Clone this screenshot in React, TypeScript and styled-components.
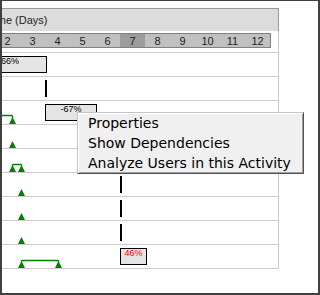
import React from "react";
import styled, { createGlobalStyle } from "styled-components";

const Global = createGlobalStyle`
  html, body { margin: 0; padding: 0; background: #fff; }
  #root { width: 320px; height: 295px; }
`;

const Frame = styled.div`
  position: relative;
  box-sizing: border-box;
  width: 320px;
  height: 295px;
  overflow: hidden;
  background: #fff;
  border-style: solid;
  border-color: #404040;
  border-width: 1px 2px 2px 2px;
  padding-top: 7px;
`;

const Chart = styled.div`
  width: 309px;
  margin-left: -32px;
  font-family: "Liberation Sans", Arial, sans-serif;
`;

const Band = styled.div`
  box-sizing: border-box;
  height: 23px;
  border-top: 1px solid #9a9a9a;
  border-right: 1px solid #9a9a9a;
  background: #dcdcdc;
  padding-left: 18px;
  display: flex;
  align-items: center;
  font-size: 11px;
  color: #222;
`;

const Body = styled.div`
  border-right: 1px solid #cccccc;
  padding-top: 2px;
`;

const DayStrip = styled.div`
  box-sizing: border-box;
  display: flex;
  width: 301px;
  height: 15px;
  border: 1px solid #808080;
  border-left: none;
  background: #c0c0c0;
  margin-bottom: 4px;
`;

const DayCell = styled.div<{ $current?: boolean }>`
  width: 25px;
  flex: none;
  display: flex;
  align-items: center;
  justify-content: center;
  font-size: 11px;
  color: #222;
  background: ${(p) => (p.$current ? "#9c9c9c" : "transparent")};
`;

const Rows = styled.div`
  border-bottom: 1px solid #cccccc;
`;

const Row = styled.div`
  position: relative;
  box-sizing: border-box;
  height: 24px;
  border-top: 1px solid #cccccc;
`;

const Bar = styled.div<{ $red?: boolean }>`
  position: absolute;
  top: 3px;
  box-sizing: border-box;
  height: 17px;
  border: 1px solid #000;
  background: #e4e4e4;
  font-size: 9px;
  line-height: 9px;
  text-align: center;
  white-space: nowrap;
  color: ${(p) => (p.$red ? "#ff0000" : "#000")};
`;

const Tick = styled.div`
  position: absolute;
  top: 3px;
  width: 2px;
  height: 17px;
  background: #000;
`;

const Links = styled.svg`
  position: absolute;
  left: 0;
  top: 0;
  overflow: visible;
`;

const Menu = styled.div`
  position: absolute;
  left: 75px;
  top: 111px;
  box-sizing: border-box;
  width: 227px;
  background: #f0f0f0;
  border: 1px solid;
  border-color: #c4c4c4 #505050 #505050 #c4c4c4;
  box-shadow: inset 1px 1px 0 #ffffff, inset -1px -1px 0 #a0a0a0;
  font-family: "DejaVu Sans", Verdana, sans-serif;
  font-size: 14px;
  color: #000;
`;

const MenuItem = styled.div`
  height: 20px;
  line-height: 20px;
  padding: 0 10px;
  white-space: nowrap;
`;

type Item = {
  bar?: { x: number; w: number; label: string; red?: boolean };
  tick?: number;
  marks?: number[];
  link?: { from: number; to: number; y: number };
};

const rows: Item[] = [
  { bar: { x: 0, w: 77, label: "-66%" } },
  { tick: 75 },
  { bar: { x: 75, w: 52, label: "-67%" }, marks: [42.5], link: { from: 0, to: 42.5, y: 14.5 } },
  { marks: [42.5] },
  { marks: [42.5, 51.5], link: { from: 42.5, to: 51.5, y: 15.5 } },
  { marks: [51.5], tick: 150 },
  { marks: [51.5], tick: 150 },
  { marks: [51.5], tick: 150 },
  { marks: [51.5, 88.5], link: { from: 51.5, to: 88.5, y: 15.5 }, bar: { x: 150, w: 27, label: "46%", red: true } },
];

const GREEN = "#008000";

function Milestones({ marks, link }: { marks?: number[]; link?: Item["link"] }) {
  if (!marks && !link) return null;
  return (
    <Links width={309} height={23}>
      {link && (
        <>
          <line x1={link.from} y1={link.y} x2={link.to} y2={link.y} stroke={GREEN} strokeWidth={1.5} />
          {link.from > 0 && <line x1={link.from} y1={link.y} x2={link.from} y2={17} stroke={GREEN} strokeWidth={1.5} />}
          <line x1={link.to} y1={link.y} x2={link.to} y2={17} stroke={GREEN} strokeWidth={1.5} />
        </>
      )}
      {marks?.map((cx, i) => (
        <path key={i} d={`M ${cx - 3.5} 23 L ${cx} 16 L ${cx + 3.5} 23 Z`} fill={GREEN} />
      ))}
    </Links>
  );
}

export default function App() {
  const days = Array.from({ length: 12 }, (_, i) => i + 1);
  return (
    <>
      <Global />
      <Frame>
        <Chart>
          <Band>Time (Days)</Band>
          <Body>
            <DayStrip>
              {days.map((d) => (
                <DayCell key={d} $current={d === 7}>
                  {d}
                </DayCell>
              ))}
            </DayStrip>
            <Rows>
              {rows.map((r, i) => (
                <Row key={i}>
                  <Milestones marks={r.marks} link={r.link} />
                  {r.tick !== undefined && <Tick style={{ left: r.tick }} />}
                  {r.bar && (
                    <Bar $red={r.bar.red} style={{ left: r.bar.x, width: r.bar.w }}>
                      {r.bar.label}
                    </Bar>
                  )}
                </Row>
              ))}
            </Rows>
          </Body>
        </Chart>
        <Menu>
          <MenuItem>Properties</MenuItem>
          <MenuItem>Show Dependencies</MenuItem>
          <MenuItem>Analyze Users in this Activity</MenuItem>
        </Menu>
      </Frame>
    </>
  );
}
